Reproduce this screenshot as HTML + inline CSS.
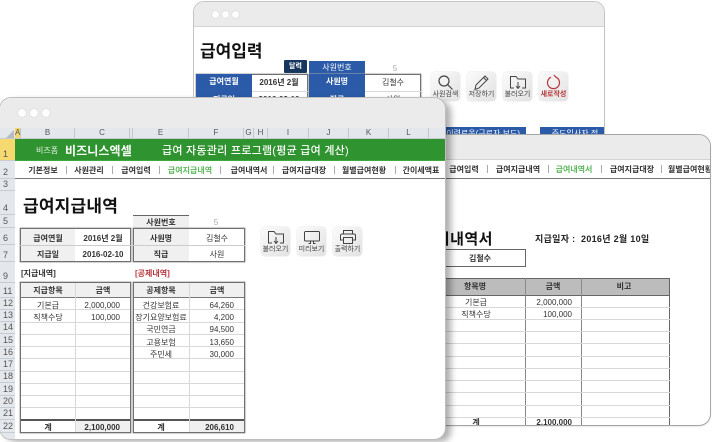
<!DOCTYPE html>
<html lang="ko"><head><meta charset="utf-8">
<style>
html,body{margin:0;padding:0;background:#fff}
body{width:714px;height:442px;overflow:hidden;position:relative;font-family:"Liberation Sans","Noto Sans CJK KR",sans-serif;color:#333}
div,span,svg{position:absolute;box-sizing:border-box}
#stage{left:0;top:0;width:714px;height:442px;overflow:hidden;filter:blur(.35px)}
.win{background:#fff;overflow:hidden}
.bar{background:#ebebeb;border-bottom:1px solid #d4d4d4;left:0;width:100%}
.dot{width:7px;height:7px;border-radius:50%;background:#fff;box-shadow:0 0 1px #aaa}
.t{white-space:nowrap;text-align:center;font-size:8px;line-height:12px;transform:translateX(-50%)}
.r{white-space:nowrap;text-align:right;font-size:8px;line-height:12px}
.l{white-space:nowrap;font-size:8px;line-height:12px}
.b{font-weight:700}
.front .t,.front .r,.front .l{margin-top:1px}
.blue{background:#2b5ba8;color:#fff;text-align:center;font-size:8px;font-weight:700}
.sep{width:1px;height:8px;background:#aaa}
.btn{width:29px;height:29px;border-radius:4px;background:linear-gradient(135deg,#fbfbfb,#e2e2e2);box-shadow:0 0 1px #bbb}
.btn span{left:-4px;width:37px;top:18px;text-align:center;font-size:7px;line-height:9px;color:#444;white-space:nowrap}
.hl{height:1px;background:#d8d8d8}
.vl{width:1px;background:#d8d8d8}
.frame{border:1px solid #707070;box-shadow:0 0 1px .5px #a5a5a5}
.g{background:#f0f0f0}
.cols{background:#e4e8ed;height:11px;top:30px;left:0;width:445px;border-bottom:1px solid #c7ccd2}
.c{top:0;height:10px;font-size:8px;line-height:10px;text-align:center;color:#555;border-right:1px solid #c3c8ce}
.rn{left:0;width:15px;background:#e4e8ed;border-bottom:1px solid #c7ccd2;font-size:9px;color:#555;padding-left:3px;display:flex;align-items:flex-end;line-height:11px}
</style></head><body>
<div id="stage">

<!-- back window -->
<div class="win" style="left:193px;top:1px;width:412px;height:150px;border-radius:11px 11px 0 0;border:1px solid #c4c4c4">
  <div class="bar" style="top:0;height:25px"></div>
  <div class="dot" style="left:18px;top:9px"></div><div class="dot" style="left:28px;top:9px"></div><div class="dot" style="left:38px;top:9px"></div>
  <div class="l b" style="left:6px;top:38px;font-size:17px;line-height:24px;color:#111">급여입력</div>
  <div style="left:90px;top:58px;width:23px;height:13px;background:#17375e;border-radius:1px;color:#fff;font-size:7px;font-weight:700;line-height:13px;text-align:center">달력</div>
  <div class="blue" style="left:115px;top:59px;width:56px;height:13px;line-height:13px;font-weight:400">사원번호</div>
  <div class="t" style="left:201px;top:61px;color:#aaa">5</div>
  <div class="frame" style="left:2px;top:72px;width:112px;height:40px"></div>
  <div class="blue" style="left:2px;top:72px;width:56px;height:40px;line-height:16px">급여연월<br><span style="position:static;display:block;margin-top:2px">지급일</span></div>
  <div class="t b" style="left:85px;top:75px">2016년 2월</div>
  <div class="hl" style="left:58px;top:89px;width:56px"></div>
  <div class="t b" style="left:85px;top:92px">2016-02-10</div>
  <div class="frame" style="left:115px;top:72px;width:112px;height:40px"></div>
  <div class="blue" style="left:115px;top:72px;width:56px;height:40px;line-height:16px">사원명<br><span style="position:static;display:block;margin-top:2px">직급</span></div>
  <div class="t" style="left:199px;top:75px">김철수</div>
  <div class="hl" style="left:171px;top:89px;width:56px"></div>
  <div class="t" style="left:199px;top:92px">사원</div>

  <div class="btn" style="left:237px;top:70px"><svg style="left:6px;top:2px" width="17" height="17" viewBox="0 0 17 17" fill="none" stroke="#444" stroke-width="1.2"><circle cx="7" cy="7" r="5"/><path d="M10.6 10.6L15.5 15.5"/></svg><span>사원검색</span></div>
  <div class="btn" style="left:273px;top:70px"><svg style="left:6px;top:2px" width="17" height="17" viewBox="0 0 17 17" fill="none" stroke="#444" stroke-width="1"><path d="M3 11L12 2L15 5L6 14L2 15.5ZM10.5 3.5L13.5 6.5"/></svg><span>저장하기</span></div>
  <div class="btn" style="left:309px;top:70px"><svg style="left:6px;top:3px" width="18" height="15" viewBox="0 0 18 15" fill="none" stroke="#444" stroke-width="1"><path d="M5 13H1.5V1.5H7L9 4H16.5V13H13M9 7V13M7 11L9 13.5L11 11"/></svg><span>불러오기</span></div>
  <div class="btn" style="left:345px;top:70px"><svg style="left:6px;top:2px" width="17" height="17" viewBox="0 0 17 17" fill="none" stroke="#b8363c" stroke-width="1.2"><path d="M6 3.2A6 6 0 1 0 11 3.2L8.8 1"/></svg><span style="color:#b8363c;font-weight:700">새로작성</span></div>
  <div class="blue" style="left:247px;top:125px;width:85px;height:24px;font-weight:400;text-align:right;padding-right:6px;line-height:13px">이력로옴(근로자 보드)</div>
  <div class="blue" style="left:346px;top:125px;width:70px;height:24px;font-weight:400;line-height:13px">주도입사자 정</div>
</div>

<!-- right window -->
<div class="win" style="left:420px;top:135px;width:290px;height:290px;border-radius:11px;box-shadow:0 0 0 1px #a6a6a6,0 1px 2px rgba(0,0,0,.2)">
  <div class="bar" style="top:0;height:25px"></div>
  <div style="left:0;top:43px;width:100%;height:1px;background:#777"></div>
  <div class="t b" style="left:44px;top:29px">급여입력</div>
  <div class="t b" style="left:98px;top:29px">급여지급내역</div>
  <div class="t b" style="left:154px;top:29px;color:#5cb85c">급여내역서</div>
  <div class="t b" style="left:212px;top:29px">급여지급대장</div>
  <div class="t b" style="left:270px;top:29px">월별급여현황</div>
  <div class="sep" style="left:67px;top:30px"></div><div class="sep" style="left:128px;top:30px"></div><div class="sep" style="left:181px;top:30px"></div><div class="sep" style="left:241px;top:30px"></div>
  <div class="r b" style="right:217px;top:94px;font-size:15px;line-height:22px;color:#111;letter-spacing:.5px">급여내역서</div>
  <div class="l b" style="left:115px;top:97px;font-size:9px;line-height:14px;letter-spacing:.3px;color:#222">지급일자 :&nbsp; 2016년 2월 10일</div>
  <div style="left:0;top:114px;width:106px;height:18px;border:1px solid #666"></div>
  <div class="t" style="left:60px;top:118px;font-weight:700">김철수</div>
  <div style="left:0;top:143px;width:250px;height:18px;background:#bcbcbc;border:1px solid #666"></div>
  <div style="left:105px;top:143px;width:1px;height:147px;background:#888"></div>
  <div style="left:161px;top:143px;width:1px;height:147px;background:#888"></div>
  <div style="left:249px;top:143px;width:1px;height:147px;background:#666"></div>
  <div class="t b" style="left:55px;top:146px">항목명</div>
  <div class="t b" style="left:133px;top:146px">금액</div>
  <div class="t b" style="left:204px;top:146px">비고</div>
  <div class="t" style="left:56px;top:162px">기본급</div><div class="r" style="right:138px;top:162px">2,000,000</div>
  <div class="t" style="left:56px;top:174px">직책수당</div><div class="r" style="right:138px;top:174px">100,000</div>
  <div class="hl" style="left:0;top:172px;width:250px"></div>
  <div class="hl" style="left:0;top:184px;width:250px"></div>
  <div class="hl" style="left:0;top:196px;width:250px"></div>
  <div class="hl" style="left:0;top:208px;width:250px"></div>
  <div class="hl" style="left:0;top:221px;width:250px"></div>
  <div class="hl" style="left:0;top:233px;width:250px"></div>
  <div class="hl" style="left:0;top:245px;width:250px"></div>
  <div class="hl" style="left:0;top:257px;width:250px"></div>
  <div class="hl" style="left:0;top:270px;width:250px"></div>
  <div class="hl" style="left:0;top:282px;width:250px"></div>
  <div class="t b" style="left:56px;top:282px">계</div><div class="r b" style="right:138px;top:282px">2,100,000</div>
</div>

<!-- front window -->
<div class="win front" style="left:0;top:98px;width:445px;height:341px;border-radius:11px;box-shadow:0 0 0 1px #bdbdbd,6px 3px 7px rgba(0,0,0,.32)">
  <div class="bar" style="top:0;height:30px;border:0"></div>
  <div class="dot" style="left:18px;top:11px;width:8px;height:8px"></div><div class="dot" style="left:30px;top:11px;width:8px;height:8px"></div><div class="dot" style="left:42px;top:11px;width:8px;height:8px"></div>
  <div class="cols">
    <div class="c" style="left:15px;width:6px;background:#f5d76e">A</div>
    <div class="c" style="left:21px;width:54px">B</div>
    <div class="c" style="left:75px;width:55px">C</div>
    <div class="c" style="left:130px;width:3px;overflow:hidden"></div>
    <div class="c" style="left:133px;width:56px">E</div>
    <div class="c" style="left:189px;width:55px">F</div>
    <div class="c" style="left:244px;width:10px">G</div>
    <div class="c" style="left:254px;width:14px">H</div>
    <div class="c" style="left:268px;width:41px">I</div>
    <div class="c" style="left:309px;width:40px">J</div>
    <div class="c" style="left:349px;width:40px">K</div>
    <div class="c" style="left:389px;width:40px">L</div>
  </div>
  <svg style="left:6px;top:32px" width="8" height="8"><path d="M8 0V8H0Z" fill="#b5bbc2"/></svg>

  <div class="rn" style="top:41px;height:22px;background:#f6d96f">1</div>
  <div class="rn" style="top:63px;height:18px">2</div>
  <div class="rn" style="top:81px;height:12px">3</div>
  <div class="rn" style="top:93px;height:24px">4</div>
  <div class="rn" style="top:117px;height:13px">5</div>
  <div class="rn" style="top:130px;height:17px">6</div>
  <div class="rn" style="top:147px;height:17px">7</div>
  <div class="rn" style="top:164px;height:21px">9</div>
  <div class="rn" style="top:185px;height:15px">11</div>
  <div class="rn" style="top:200px;height:12px">12</div>
  <div class="rn" style="top:212px;height:12px">13</div>
  <div class="rn" style="top:224px;height:12px">14</div>
  <div class="rn" style="top:236px;height:13px">15</div>
  <div class="rn" style="top:249px;height:12px">16</div>
  <div class="rn" style="top:261px;height:12px">17</div>
  <div class="rn" style="top:273px;height:12px">18</div>
  <div class="rn" style="top:285px;height:13px">19</div>
  <div class="rn" style="top:298px;height:12px">20</div>
  <div class="rn" style="top:310px;height:12px">21</div>
  <div class="rn" style="top:322px;height:13px">22</div>
  <div class="rn" style="top:335px;height:8px"></div>

  <div style="left:15px;top:41px;width:431px;height:22px;background:#2f932f;border-bottom:1px solid #3da83d"></div>
  <div class="l" style="left:36px;top:46px;color:#e8f3e8;font-size:8px">비즈폼</div>
  <div class="l b" style="left:65px;top:43px;color:#fff;font-size:12px;line-height:18px;letter-spacing:.1px">비즈니스엑셀</div>
  <div class="l" style="left:162px;top:45px;color:#fff;font-size:11px;line-height:15px;letter-spacing:.25px;font-weight:500">급여 자동관리 프로그램(평균 급여 계산)</div>

  <div style="left:15px;top:80px;width:431px;height:1px;background:#777"></div>
  <div class="t b" style="left:43px;top:66px">기본정보</div>
  <div class="t b" style="left:89px;top:66px">사원관리</div>
  <div class="t b" style="left:136px;top:66px">급여입력</div>
  <div class="t b" style="left:190px;top:66px;color:#5cb85c">급여지급내역</div>
  <div class="t b" style="left:249px;top:66px">급여내역서</div>
  <div class="t b" style="left:304px;top:66px">급여지급대장</div>
  <div class="t b" style="left:364px;top:66px">월별급여현황</div>
  <div class="t b" style="left:421px;top:66px">간이세액표</div>
  <div class="sep" style="left:66px;top:68px"></div><div class="sep" style="left:112px;top:68px"></div><div class="sep" style="left:159px;top:68px"></div><div class="sep" style="left:220px;top:68px"></div><div class="sep" style="left:273px;top:68px"></div><div class="sep" style="left:334px;top:68px"></div><div class="sep" style="left:395px;top:68px"></div>

  <div class="l b" style="left:23px;top:96px;font-size:17px;line-height:24px;color:#111;letter-spacing:.2px">급여지급내역</div>

  <!-- top info -->
  <div class="g" style="left:133px;top:117px;width:56px;height:13px;border-top:1px solid #666"></div>
  <div class="t b" style="left:161px;top:118px">사원번호</div>
  <div class="t" style="left:216px;top:118px;color:#aaa">5</div>

  <div class="g" style="left:20px;top:130px;width:55px;height:34px"></div>
  <div class="frame" style="left:20px;top:130px;width:111px;height:34px"></div>
  <div class="hl" style="left:20px;top:147px;width:111px;background:#ccc"></div>
  <div class="t b" style="left:48px;top:134px">급여연월</div>
  <div class="t b" style="left:103px;top:134px">2016년 2월</div>
  <div class="t b" style="left:48px;top:150px">지급일</div>
  <div class="t b" style="left:103px;top:150px">2016-02-10</div>

  <div class="g" style="left:133px;top:130px;width:56px;height:34px"></div>
  <div class="frame" style="left:133px;top:130px;width:112px;height:34px"></div>
  <div class="hl" style="left:133px;top:147px;width:112px;background:#ccc"></div>
  <div class="t b" style="left:161px;top:134px">사원명</div>
  <div class="t" style="left:217px;top:134px">김철수</div>
  <div class="t b" style="left:161px;top:150px">직급</div>
  <div class="t" style="left:217px;top:150px">사원</div>

  <div class="btn" style="left:261px;top:129px"><svg style="left:6px;top:3px" width="18" height="15" viewBox="0 0 18 15" fill="none" stroke="#444" stroke-width="1"><path d="M5 13H1.5V1.5H7L9 4H16.5V13H13M9 7V13M7 11L9 13.5L11 11"/></svg><span>불러오기</span></div>
  <div class="btn" style="left:297px;top:129px"><svg style="left:6px;top:3px" width="18" height="15" viewBox="0 0 18 15" fill="none" stroke="#444" stroke-width="1"><path d="M2.5 1.5H15.5A1 1 0 0 1 16.5 2.5V10A1 1 0 0 1 15.5 11H2.5A1 1 0 0 1 1.5 10V2.5A1 1 0 0 1 2.5 1.5ZM7.5 11V13.5H5.5M10.5 11V13.5H12.5"/></svg><span>미리보기</span></div>
  <div class="btn" style="left:333px;top:129px"><svg style="left:6px;top:2px" width="18" height="16" viewBox="0 0 18 16" fill="none" stroke="#444" stroke-width="1"><path d="M4.5 5V1.5H13.5V5M4.5 11H1.5V6.5A1.5 1.5 0 0 1 3 5H15A1.5 1.5 0 0 1 16.5 6.5V11H13.5M4.5 8.5H13.5V14.5H4.5Z"/></svg><span>출력하기</span></div>

  <div class="l b" style="left:21px;top:169px;color:#333">[지급내역]</div>
  <div class="l b" style="left:135px;top:169px;color:#b8363c">[공제내역]</div>

  <!-- left table -->
  <div class="g" style="left:20px;top:184px;width:111px;height:16px"></div>
  <div class="g" style="left:75px;top:322px;width:56px;height:12px"></div>
  <div class="hl" style="left:20px;top:199px;width:111px;background:#777"></div>
  <div class="hl" style="left:20px;top:211px;width:111px"></div><div class="hl" style="left:20px;top:224px;width:111px"></div><div class="hl" style="left:20px;top:236px;width:111px"></div><div class="hl" style="left:20px;top:248px;width:111px"></div><div class="hl" style="left:20px;top:260px;width:111px"></div><div class="hl" style="left:20px;top:273px;width:111px"></div><div class="hl" style="left:20px;top:285px;width:111px"></div><div class="hl" style="left:20px;top:297px;width:111px"></div><div class="hl" style="left:20px;top:309px;width:111px"></div>
  <div class="hl" style="left:20px;top:321px;width:111px;height:2px;background:#555"></div>
  <div class="vl" style="left:75px;top:184px;height:150px"></div>
  <div class="frame" style="left:20px;top:184px;width:111px;height:151px"></div>
  <div class="t b" style="left:48px;top:186px">지급항목</div><div class="t b" style="left:103px;top:186px">금액</div>
  <div class="t" style="left:48px;top:201px">기본급</div><div class="r" style="right:325px;top:201px">2,000,000</div>
  <div class="t" style="left:48px;top:213px">직책수당</div><div class="r" style="right:325px;top:213px">100,000</div>
  <div class="t b" style="left:48px;top:323px">계</div><div class="r b" style="right:325px;top:323px">2,100,000</div>

  <!-- right table -->
  <div class="g" style="left:133px;top:184px;width:112px;height:16px"></div>
  <div class="g" style="left:189px;top:322px;width:56px;height:12px"></div>
  <div class="hl" style="left:133px;top:199px;width:112px;background:#777"></div>
  <div class="hl" style="left:133px;top:211px;width:112px"></div><div class="hl" style="left:133px;top:224px;width:112px"></div><div class="hl" style="left:133px;top:236px;width:112px"></div><div class="hl" style="left:133px;top:248px;width:112px"></div><div class="hl" style="left:133px;top:260px;width:112px"></div><div class="hl" style="left:133px;top:273px;width:112px"></div><div class="hl" style="left:133px;top:285px;width:112px"></div><div class="hl" style="left:133px;top:297px;width:112px"></div><div class="hl" style="left:133px;top:309px;width:112px"></div>
  <div class="hl" style="left:133px;top:321px;width:112px;height:2px;background:#555"></div>
  <div class="vl" style="left:189px;top:184px;height:150px"></div>
  <div class="frame" style="left:133px;top:184px;width:112px;height:151px"></div>
  <div class="t b" style="left:161px;top:186px">공제항목</div><div class="t b" style="left:217px;top:186px">금액</div>
  <div class="t" style="left:161px;top:201px">건강보험료</div><div class="r" style="right:211px;top:201px">64,260</div>
  <div class="t" style="left:161px;top:213px">장기요양보험료</div><div class="r" style="right:211px;top:213px">4,200</div>
  <div class="t" style="left:161px;top:225px">국민연금</div><div class="r" style="right:211px;top:225px">94,500</div>
  <div class="t" style="left:161px;top:238px">고용보험</div><div class="r" style="right:211px;top:238px">13,650</div>
  <div class="t" style="left:161px;top:250px">주민세</div><div class="r" style="right:211px;top:250px">30,000</div>
  <div class="t b" style="left:161px;top:323px">계</div><div class="r b" style="right:211px;top:323px">206,610</div>
</div>
</div>
</body></html>
